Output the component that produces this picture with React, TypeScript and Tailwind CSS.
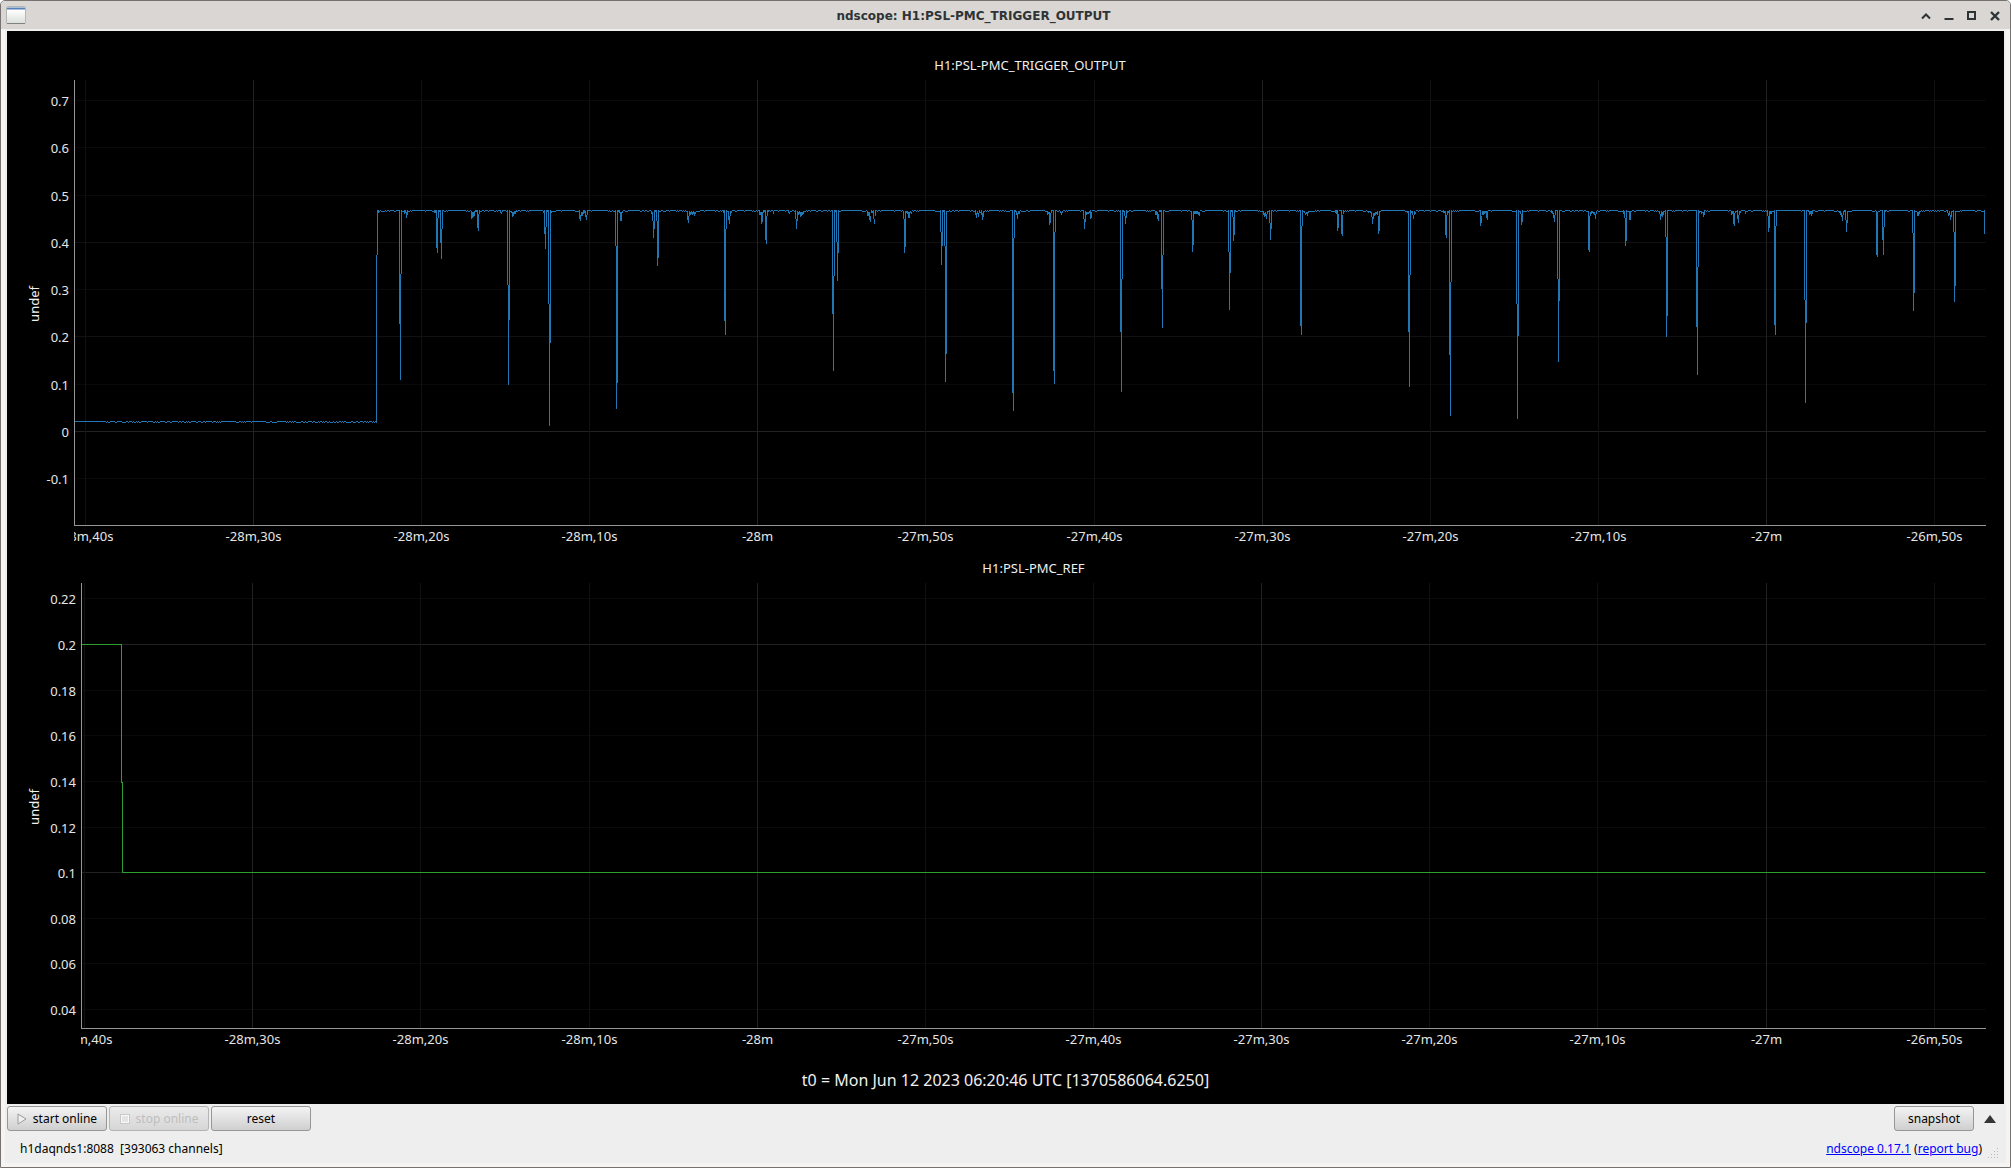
import type { ReactNode } from 'react'

interface Tick {
    pos: number
    label: string
    line: string
}

interface PlotProps {
    title: string
    unit: string
    width: number
    gutter: string
    xTicks: Tick[]
    yTicks: Tick[]
    children: ReactNode
}

const PLOT_HEIGHT = 446

const GRID_MAJOR = '#222222'
const GRID_MINOR = '#111111'
const GRID_FAINT = '#0a0a0a'

const timeLabels = [
    '-28m,40s', '-28m,30s', '-28m,20s', '-28m,10s', '-28m', '-27m,50s',
    '-27m,40s', '-27m,30s', '-27m,20s', '-27m,10s', '-27m', '-26m,50s',
]

// every third 10s tick gets the brighter line
const makeTimeTicks = (start: number, step: number): Tick[] =>
    timeLabels.map((label, i) => ({
        pos: Math.floor(start + i * step) + 0.5,
        label,
        line: i % 3 === 1 ? GRID_MAJOR : GRID_MINOR,
    }))

const triggerTicks: Tick[] = [7, 6, 5, 4, 3, 2, 1, 0, -1].map((n) => ({
    pos: Math.floor(351.5 - n * 47.3) + 0.5,
    label: n === 0 ? '0' : (n / 10).toFixed(1),
    line: n === 0 ? GRID_MAJOR : n === 2 || n === 4 ? GRID_MINOR : GRID_FAINT,
}))

const refTicks: Tick[] = ['0.22', '0.2', '0.18', '0.16', '0.14', '0.12', '0.1', '0.08', '0.06', '0.04'].map((label, i) => ({
    pos: Math.floor(15.9 + i * 45.63) + 0.5,
    label,
    line: label === '0.2' || label === '0.1' ? GRID_MAJOR : GRID_FAINT,
}))

// Each row is a start column followed by the min/max pair of every column
const dips: number[][] = [
    [302, 175, 343, 130, 175, 130, 133],
    [325, 130, 244, 194, 300, 130, 194],
    [329, 131, 132, 130, 134, 130, 133, 132, 138, 130, 135],
    [360, 130, 133, 130, 133, 130, 168, 138, 173, 130, 138, 130, 132, 130, 163, 149, 179, 130, 149],
    [397, 131, 139, 132, 138, 132, 137, 131, 136, 130, 132, 130, 132, 130, 148, 134, 151, 130, 134],
    [426, 130, 133, 132, 134, 130, 132],
    [433, 130, 205, 205, 305, 130, 240, 131, 132, 131, 133, 132, 137, 132, 136, 131, 134, 131, 134, 130, 132],
    [469, 131, 133, 130, 154, 147, 169, 130, 147, 130, 132, 130, 224, 224, 346, 130, 263, 131, 133],
    [505, 130, 139, 135, 141, 132, 136, 132, 136, 130, 134, 130, 133, 131, 137, 135, 140, 130, 135],
    [541, 130, 166, 166, 329, 130, 303, 130, 132, 130, 133, 132, 141, 132, 141, 131, 133],
    [577, 131, 134, 132, 141, 141, 158, 130, 149, 130, 132, 130, 141, 141, 186, 130, 178, 131, 132, 131, 132],
    [613, 131, 140, 136, 143, 131, 136, 132, 135, 131, 134, 132, 135, 131, 134, 132, 136, 132, 134, 131, 132, 131, 132, 131, 132, 131, 132],
    [649, 130, 133, 130, 241, 149, 255, 130, 149, 131, 132, 131, 140, 136, 144, 131, 136, 131, 133],
    [685, 130, 135, 132, 135, 132, 144, 132, 142, 130, 133, 130, 132, 130, 160, 136, 164, 130, 136, 130, 132],
    [699, 131, 134],
    [714, 130, 133, 132, 134, 131, 132],
    [721, 130, 139, 139, 149, 131, 141, 132, 135, 131, 134, 132, 137, 132, 136, 132, 135, 131, 134],
    [758, 130, 234, 196, 291, 130, 196, 130, 132, 130, 162, 162, 201, 130, 173, 131, 132],
    [793, 131, 136, 132, 136, 132, 140, 136, 142, 130, 133, 131, 133, 130, 139, 139, 144, 130, 136],
    [829, 131, 139, 139, 173, 131, 167, 131, 133, 131, 134, 132, 138, 132, 138, 131, 133, 132, 134],
    [866, 130, 152, 152, 185, 130, 166, 130, 132, 130, 166, 166, 302, 131, 274],
    [901, 130, 135, 133, 138, 131, 134, 133, 137, 130, 133, 132, 133, 130, 135, 133, 140, 131, 137],
    [938, 130, 313, 158, 331, 130, 158, 130, 132, 131, 135, 133, 139, 131, 134, 131, 134],
    [973, 131, 135, 132, 134, 132, 145, 133, 143, 130, 133, 130, 131, 130, 291, 152, 304, 130, 152],
    [986, 131, 133, 132, 135, 131, 133],
    [1009, 130, 139, 139, 149, 131, 142, 132, 135, 132, 134, 132, 134, 131, 133, 130, 139, 132, 138],
    [1046, 130, 252, 199, 312, 130, 199, 130, 132, 131, 136, 136, 144, 130, 138, 131, 133, 131, 132],
    [1081, 131, 135, 131, 135, 132, 139, 134, 141, 130, 132, 130, 132, 130, 209, 175, 248, 130, 175],
    [1117, 131, 140, 140, 172, 131, 165, 131, 134, 131, 134, 131, 134, 131, 134, 132, 135, 132, 136],
    [1154, 130, 172, 172, 230, 130, 193, 130, 132, 130, 137, 137, 161, 130, 155, 130, 132],
    [1189, 131, 135, 133, 137, 132, 136, 134, 139, 131, 134, 131, 132, 130, 143, 143, 160, 130, 149],
    [1226, 130, 246, 146, 255, 130, 146, 131, 132, 131, 133, 133, 135, 132, 134, 132, 136, 131, 133],
    [1261, 130, 133, 130, 134, 130, 151, 134, 148, 130, 131, 130, 131, 130, 154, 135, 156, 130, 134],
    [1294, 131, 133, 131, 132, 131, 133, 132, 137, 137, 144, 133, 139, 133, 136, 132, 135, 132, 134, 131, 135, 136, 154, 131, 151],
    [1333, 131, 133, 131, 252, 195, 307, 130, 195, 131, 133, 131, 135, 135, 139, 131, 135, 132, 134],
    [1369, 130, 133, 131, 133, 131, 155, 135, 158, 131, 135, 131, 133, 130, 275, 202, 336, 130, 202],
    [1406, 130, 146, 136, 143, 131, 135, 131, 135, 131, 134, 131, 133, 131, 138, 131, 140],
    [1442, 130, 224, 224, 339, 130, 256, 131, 132, 131, 134, 134, 145, 130, 142, 131, 132],
    [1477, 130, 133, 131, 134, 133, 138, 135, 142, 130, 135, 130, 131, 130, 199, 199, 282, 130, 221],
    [1514, 131, 170, 136, 172, 132, 136, 131, 134, 131, 133, 132, 134, 132, 135, 134, 139, 131, 134],
    [1549, 130, 134, 131, 138, 138, 166, 130, 161, 131, 132, 131, 132, 131, 140, 131, 140, 131, 132],
    [1585, 131, 134, 134, 140, 131, 136, 132, 137, 131, 135, 131, 132, 130, 157, 157, 257, 130, 236],
    [1622, 130, 247, 187, 295, 130, 187, 131, 133, 131, 132, 131, 134, 132, 133, 132, 137, 130, 135],
    [1657, 131, 135, 131, 134, 131, 144, 133, 146, 131, 133, 131, 132, 130, 139, 135, 143, 131, 135, 131, 133],
    [1671, 131, 134],
    [1693, 130, 136, 136, 152, 131, 148, 131, 134, 131, 134, 131, 132, 131, 132, 130, 245, 146, 255, 130, 146],
    [1730, 130, 220, 220, 323, 130, 243, 130, 131, 130, 132, 131, 135, 131, 134, 131, 136, 130, 134],
    [1765, 131, 133, 131, 135, 133, 137, 135, 141, 131, 135, 130, 132, 130, 140, 140, 152, 131, 143],
    [1802, 131, 175, 132, 177, 131, 132, 131, 132, 130, 131, 130, 131, 130, 160, 147, 175, 130, 147, 130, 132],
    [1838, 130, 153, 153, 231, 130, 213, 131, 132, 131, 132, 132, 136, 132, 136, 131, 134],
    [1873, 130, 133, 133, 136, 131, 135, 135, 140, 131, 137, 131, 132, 130, 152, 152, 222, 131, 206, 131, 132],
    [1907, 131, 132, 131, 132, 131, 132, 130, 154],
]

function buildTriggerPath() {
    const columns = new Map<number, [number, number]>()
    for (const [start, ...values] of dips) {
        for (let i = 0; i < values.length; i += 2) {
            columns.set(start + i / 2, [values[i], values[i + 1]])
        }
    }

    let path = ''
    for (let x = 1; x <= 1910; x++) {
        const busy = columns.has(x - 5) || columns.has(x + 5)
        const noise = (x * 7919 + ((x * x) % 31) * 13) % 10
        const level = x < 302
            ? (x > 31 && noise < 4 ? 342 : 341)
            : (noise < (busy ? 5 : 1) ? 131 : 130)
        const [top, bottom] = columns.get(x) ?? [level, level + 1]
        path += `M${x}.5 ${top}V${bottom}`
    }
    return path
}

const triggerPath = buildTriggerPath()

function Plot({ title, unit, width, gutter, xTicks, yTicks, children }: PlotProps) {
    return (
        <figure className={`grid flex-1 grid-rows-[30px_1fr_27px] pr-[18px] ${gutter}`}>
            <figcaption className="col-start-2 flex items-center justify-center text-[13px] leading-4">
                {title}
            </figcaption>

            <div className="col-start-1 row-start-2 flex min-h-0">
                <div className="flex w-10 items-center justify-center pt-[2px] pl-[14px]">
                    <span className="rotate-180 text-[13px] leading-4 [writing-mode:vertical-rl]">{unit}</span>
                </div>
                <svg className="h-full min-w-0 flex-1 overflow-visible" aria-hidden="true">
                    {yTicks.map((tick) => (
                        <text
                            key={tick.label}
                            x="100%"
                            y={`${(tick.pos / PLOT_HEIGHT) * 100}%`}
                            dx="-5"
                            dy="5"
                            textAnchor="end"
                            className="fill-[#e6e6e6] text-[13px]"
                        >
                            {tick.label}
                        </text>
                    ))}
                </svg>
            </div>

            <svg
                className="col-start-2 row-start-2 h-full w-full"
                viewBox={`0 0 ${width} ${PLOT_HEIGHT}`}
                preserveAspectRatio="none"
                shapeRendering="crispEdges"
                fill="none"
                role="img"
                aria-label={title}
            >
                {yTicks.map((tick) => (
                    <path key={tick.label} d={`M0 ${tick.pos}H${width}`} stroke={tick.line} />
                ))}
                {xTicks.map((tick) => (
                    <path key={tick.label} d={`M${tick.pos} 0V${PLOT_HEIGHT}`} stroke={tick.line} />
                ))}
                <path d={`M0.5 0V445.5H${width}`} stroke="#969696" />
                {children}
            </svg>

            <svg className="col-start-2 row-start-3 h-full w-full" aria-hidden="true">
                {xTicks.map((tick) => (
                    <text
                        key={tick.label}
                        x={`${(tick.pos / width) * 100}%`}
                        y="15"
                        textAnchor="middle"
                        className="fill-[#e6e6e6] text-[13px]"
                    >
                        {tick.label}
                    </text>
                ))}
            </svg>
        </figure>
    )
}

function TitleBar() {
    return (
        <header className="flex h-7 items-center bg-[#dad6d3] pr-[10px] pl-[5px]">
            <svg className="h-[18px] w-5" viewBox="0 0 20 18" aria-hidden="true">
                <defs>
                    <linearGradient id="pane" x1="0" y1="0" x2="0" y2="1">
                        <stop offset="0.2" stopColor="#ffffff" />
                        <stop offset="1" stopColor="#dcdeda" />
                    </linearGradient>
                </defs>
                <rect x="0.5" y="0.5" width="19" height="17" rx="1" fill="url(#pane)" stroke="#b4b6b1" />
                <path d="M1 17.5H19" stroke="#7f817d" />
                <path d="M1 2.5H19" stroke="#5580b8" strokeWidth="2" />
            </svg>
            <h1 className="flex-1 pt-[2px] text-center font-['DejaVu_Sans',sans-serif] text-xs leading-4 font-bold text-[#2e3436]">
                ndscope: H1:PSL-PMC_TRIGGER_OUTPUT
            </h1>
            <div className="flex items-center gap-[13px] pt-px text-[#2e3436]">
                <button type="button" aria-label="Roll up">
                    <svg className="block size-[10px]" viewBox="0 0 10 10" fill="none" stroke="currentColor" strokeWidth="2">
                        <path d="M1 7.5L5 3.5L9 7.5" />
                    </svg>
                </button>
                <button type="button" aria-label="Minimize">
                    <svg className="block size-[10px]" viewBox="0 0 10 10" fill="none" stroke="currentColor" strokeWidth="2">
                        <path d="M0.5 8H9.5" />
                    </svg>
                </button>
                <button type="button" aria-label="Maximize">
                    <svg className="block size-[10px]" viewBox="0 0 10 10" fill="none" stroke="currentColor" strokeWidth="2">
                        <path d="M1 1H8V8H1Z" />
                    </svg>
                </button>
                <button type="button" aria-label="Close">
                    <svg className="block size-[10px]" viewBox="0 0 10 10" fill="none" stroke="currentColor" strokeWidth="2.4">
                        <path d="M1 1L9 9M9 1L1 9" />
                    </svg>
                </button>
            </div>
        </header>
    )
}

const buttonClass =
    'flex h-[25px] items-center justify-center rounded-[3px] border border-[#969696] bg-linear-to-b from-[#f4f4f4] to-[#cfcfcf] disabled:border-[#b4b4b4] disabled:from-[#ebebeb] disabled:to-[#d6d6d6] disabled:text-[#bebebe]'

function Controls() {
    return (
        <div className="flex gap-[2px] pt-[2px] pr-2">
            <button type="button" className={`${buttonClass} w-[100px] gap-[6px]`}>
                <svg className="h-3 w-[10px]" viewBox="0 0 10 12" aria-hidden="true">
                    <path d="M1 1L9 6L1 11Z" fill="#f0f0f0" stroke="#9a9a9a" />
                </svg>
                start online
            </button>
            <button type="button" disabled className={`${buttonClass} w-[100px] gap-[6px]`}>
                <svg className="size-[10px]" viewBox="0 0 10 10" aria-hidden="true">
                    <rect x="1" y="1" width="8" height="8" fill="#e4e4e4" stroke="#fafafa" strokeWidth="2" />
                    <rect x="0.5" y="0.5" width="9" height="9" fill="none" stroke="#c8c8c8" />
                </svg>
                stop online
            </button>
            <button type="button" className={`${buttonClass} w-[100px]`}>reset</button>
            <button type="button" className={`${buttonClass} ml-auto w-20`}>snapshot</button>
            <button type="button" aria-label="Show channel table" className="ml-2 flex h-[25px] items-center">
                <svg className="h-2 w-3" viewBox="0 0 12 8" aria-hidden="true">
                    <path d="M0 8L6 0L12 8Z" fill="#333537" />
                </svg>
            </button>
        </div>
    )
}

function StatusBar() {
    return (
        <footer className="flex items-center pt-2 pr-[5px] pl-[13px]">
            <span className="whitespace-pre">{'h1daqnds1:8088  [393063 channels]'}</span>
            <span className="ml-auto">
                <a href="#ndscope" className="text-[#0000ff] underline">ndscope 0.17.1</a>
                {' ('}
                <a href="#report-bug" className="text-[#0000ff] underline">report bug</a>
                )
            </span>
            <svg className="ml-[6px] size-[11px] self-end" viewBox="0 0 11 11" shapeRendering="crispEdges" fill="#b9b9b9" aria-hidden="true">
                <path d="M9 0h1v1h-1zM6 3h1v1h-1zM9 3h1v1h-1zM3 6h1v1h-1zM6 6h1v1h-1zM9 6h1v1h-1zM0 9h1v1h-1zM3 9h1v1h-1zM6 9h1v1h-1zM9 9h1v1h-1z" />
            </svg>
        </footer>
    )
}

export default function App() {
    return (
        <div className="flex min-h-screen flex-col overflow-hidden rounded-t-[5px] border border-[#757270] bg-[#f5f4f3] font-['Noto_Sans',sans-serif] text-xs leading-5 text-black">
            <TitleBar />
            <div className="mx-1 mb-1 flex flex-1 flex-col bg-[#eeeeee] px-[2px] pt-[2px] pb-1">
                <main className="flex flex-1 flex-col bg-black pt-[19px] text-[#f0f0f0]">
                    <Plot
                        title="H1:PSL-PMC_TRIGGER_OUTPUT"
                        unit="undef"
                        width={1912}
                        gutter="grid-cols-[67px_1fr]"
                        xTicks={makeTimeTicks(11.3, 168.13)}
                        yTicks={triggerTicks}
                    >
                        <path d={triggerPath} stroke="#1f77b4" />
                    </Plot>
                    <Plot
                        title="H1:PSL-PMC_REF"
                        unit="undef"
                        width={1905}
                        gutter="grid-cols-[74px_1fr]"
                        xTicks={makeTimeTicks(3.6, 168.15)}
                        yTicks={refTicks}
                    >
                        <path d="M1 61.5H40.5V199.5H41.5V289.5H1904" stroke="#2ca02c" />
                    </Plot>
                    <p className="flex h-12 items-center justify-center text-base">
                        t0 = Mon Jun 12 2023 06:20:46 UTC [1370586064.6250]
                    </p>
                </main>
                <Controls />
                <StatusBar />
            </div>
        </div>
    )
}
